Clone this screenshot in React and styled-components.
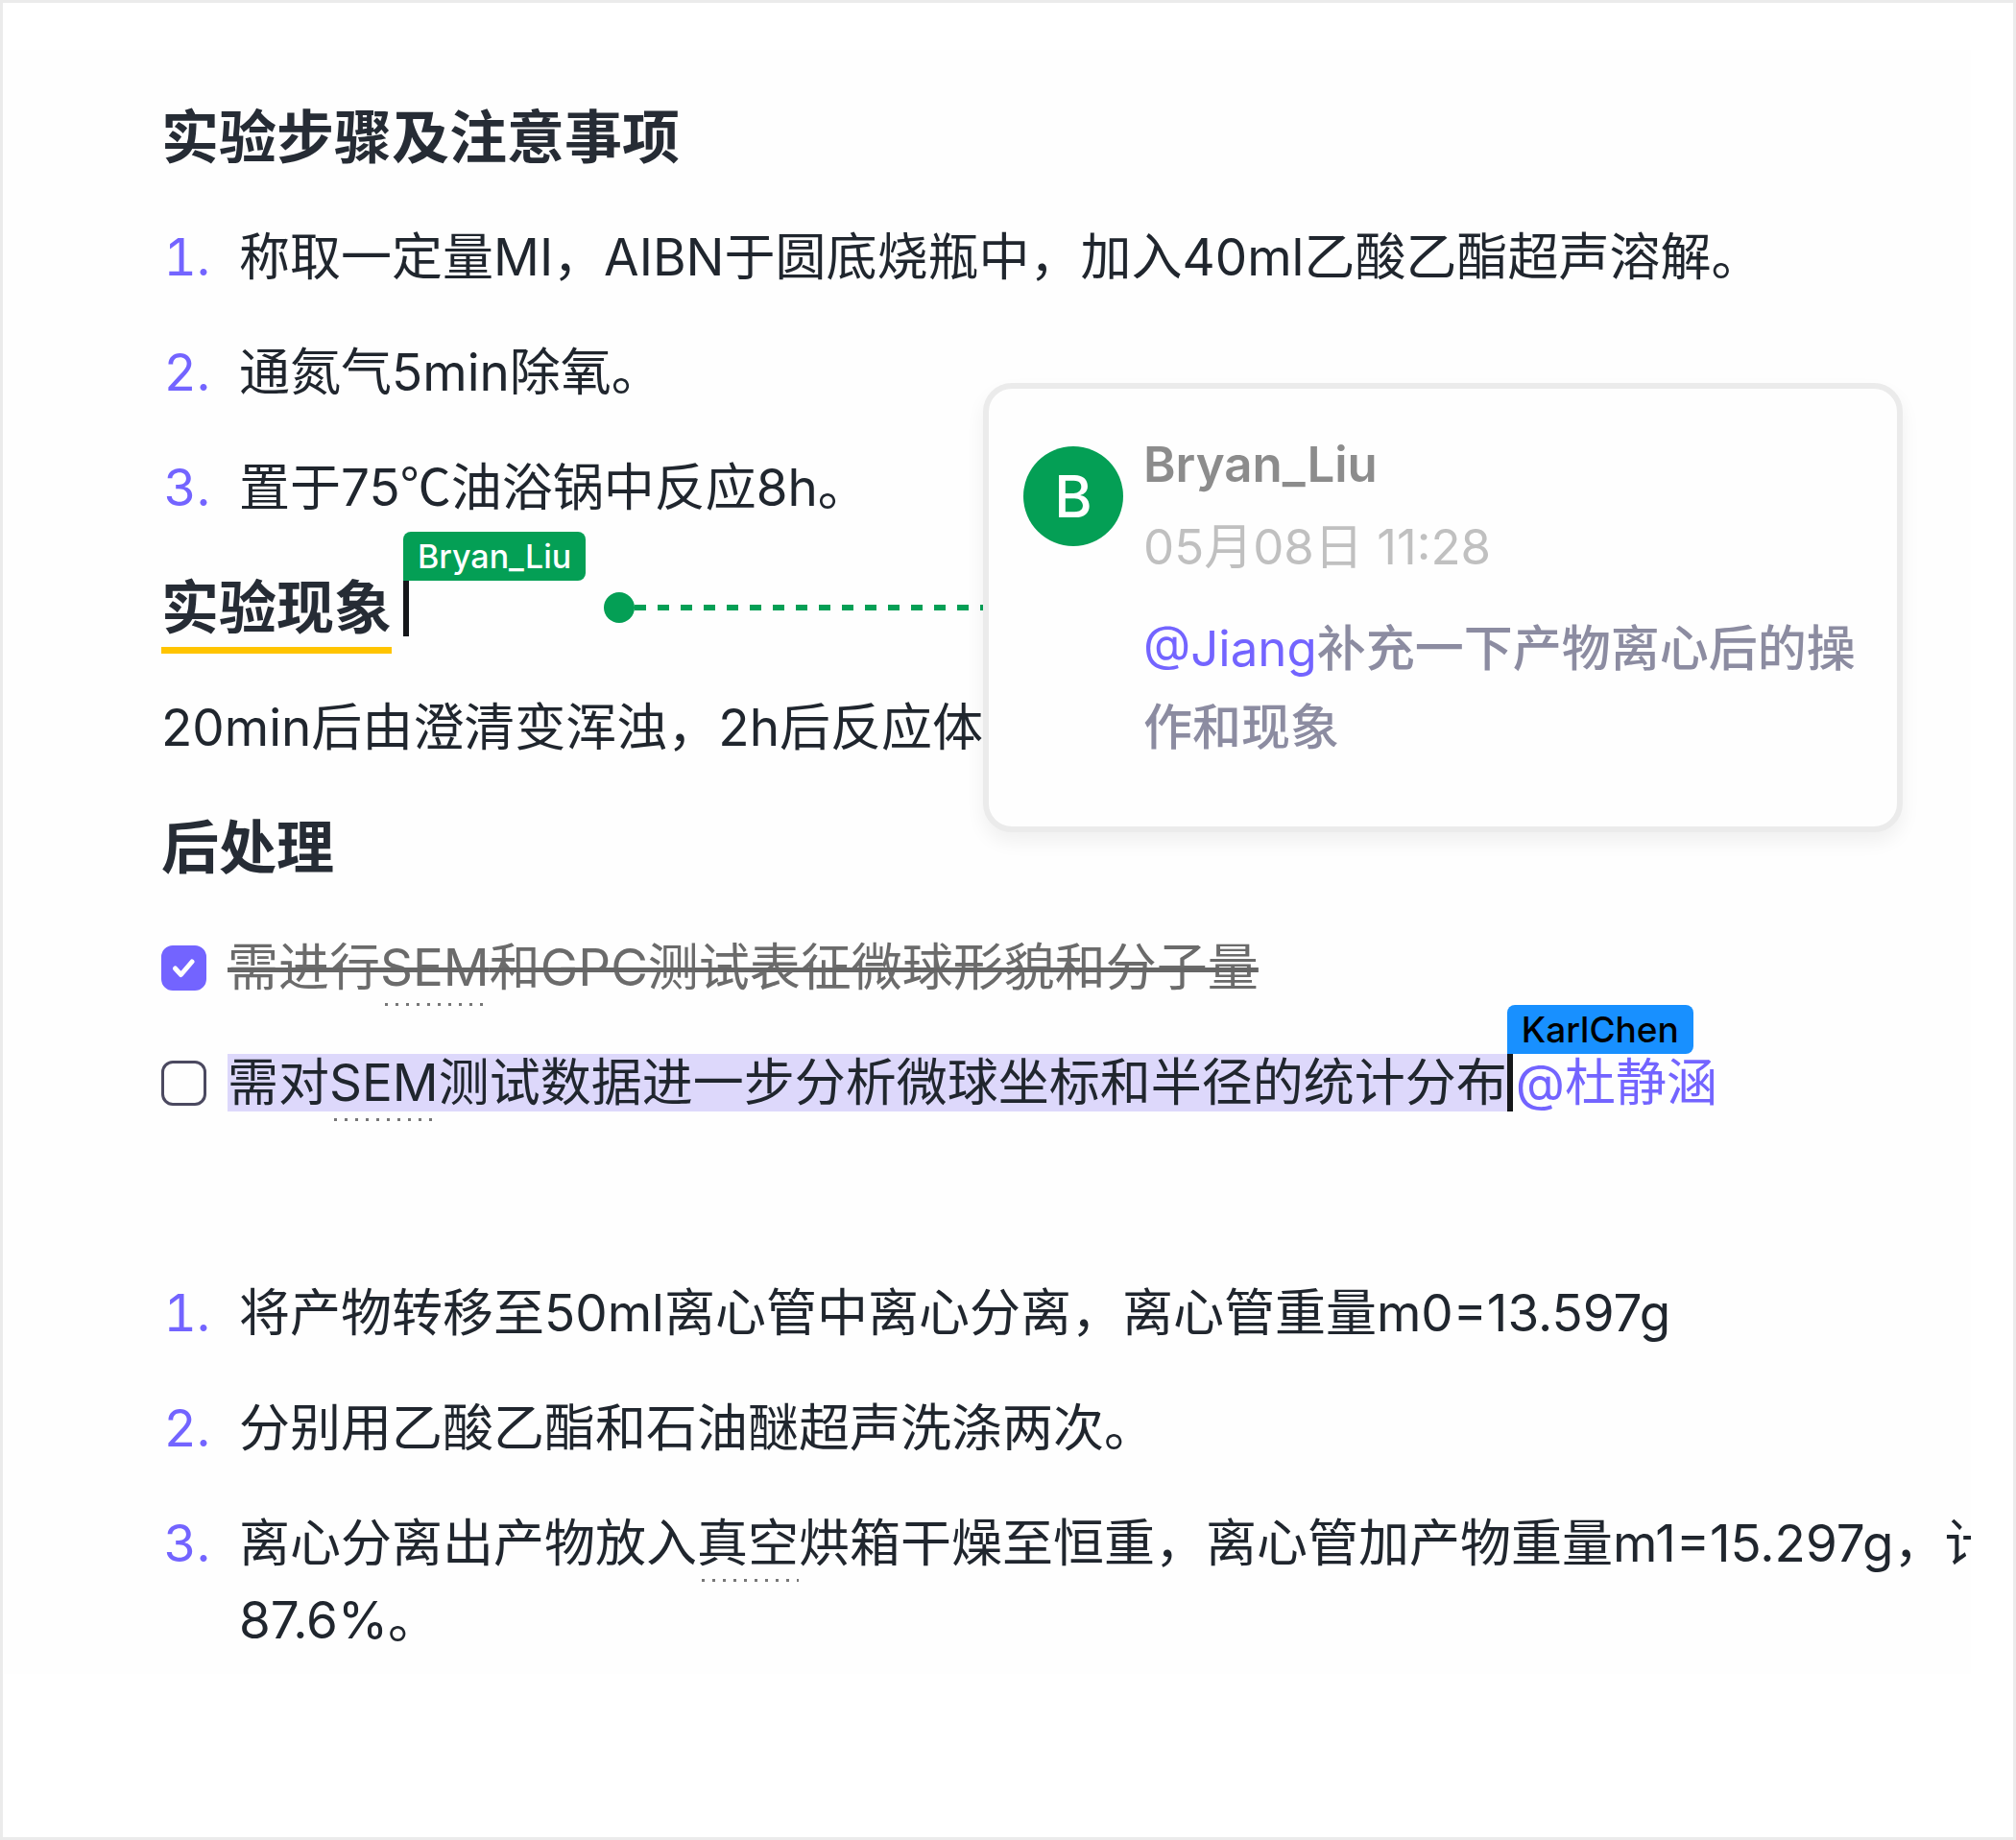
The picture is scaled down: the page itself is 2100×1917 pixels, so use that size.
import React, { useState } from 'react';
import styled, { createGlobalStyle } from 'styled-components';

const GlobalStyle = createGlobalStyle`
  * {
    box-sizing: border-box;
  }
  body {
    margin: 0;
    background-color: #fff;
    color: #20262e;
    font-family: Inter, "Noto Sans CJK SC", sans-serif;
    font-size: 53px;
    line-height: 80px;
  }
`;

const Frame = styled.div`
  min-height: 100vh;
  padding: 49px 44px 49px 0;
  border: 3px solid #ebebeb;
`;

const Paper = styled.main`
  position: relative;
  overflow: hidden;
  padding: 46px 200px 16px 165px;
  background-color: #fefefe;
`;

const Content = styled.div`
  display: flex;
  flex-direction: column;
  gap: 40px;
`;

const HeadingRow = styled.div`
  display: flex;
  align-items: center;
`;

const Heading = styled.h2`
  position: relative;
  margin: 0;
  font-size: 60px;
  font-weight: 600;
  line-height: 90px;
  white-space: nowrap;
  color: #262c35;
`;

const MarkedHeading = styled(Heading)`
  &::after {
    content: "";
    position: absolute;
    left: 0;
    right: 0;
    bottom: -3px;
    height: 7px;
    background-color: #ffc400;
  }
`;

const Caret = styled.span`
  position: relative;
  flex: none;
  width: 6px;
  height: 60px;
  background-color: #15171a;
`;

const HeadingCaret = styled(Caret)`
  height: 58px;
  margin: 2px 0 0 12px;
`;

const SelectionCaret = styled(Caret)`
  position: absolute;
  top: 0;
  left: 100%;
`;

const NameTag = styled.span`
  position: absolute;
  left: 0;
  bottom: 100%;
  padding: 0 15px;
  border-radius: 8px 8px 8px 0;
  background-color: ${(props) => props.$background};
  color: ${(props) => props.$color};
  font-size: ${(props) => props.$size};
  font-weight: 500;
  line-height: 51px;
  white-space: nowrap;
`;

const Connector = styled.div`
  display: flex;
  flex: 1;
  align-items: center;
  margin-left: 203px;
`;

const Dot = styled.span`
  width: 32px;
  height: 32px;
  border-radius: 50%;
  background-color: #049f55;
`;

const Dashes = styled.span`
  flex: 1;
  height: 6px;
  background: repeating-linear-gradient(to right, #049f55 0 12px, transparent 12px 24px);
`;

const Paragraph = styled.p`
  margin: 0;
  white-space: nowrap;
`;

const List = styled.ol`
  display: flex;
  flex-direction: column;
  gap: 40px;
  margin: 0;
  padding: 0;
  list-style: none;
`;

const Item = styled.li`
  display: grid;
  grid-template-columns: 51px 1fr;
  column-gap: 30px;
  white-space: nowrap;
`;

const ItemNumber = styled.span`
  text-align: right;
  font-variant-numeric: tabular-nums;
  color: #7364ff;
`;

// full-width unit signs such as ℃
const Unit = styled.span`
  font-family: "Noto Sans CJK SC", sans-serif;
  line-height: 1;
`;

const BlankLine = styled.div`
  height: 80px;
`;

const Task = styled.div`
  display: flex;
  align-items: center;
  height: 80px;
  white-space: nowrap;
`;

const CheckHolder = styled.span`
  position: relative;
  display: flex;
  margin-right: 22px;
`;

const CheckInput = styled.input`
  appearance: none;
  width: 47px;
  height: 47px;
  margin: 0;
  border: 3px solid #4b4960;
  border-radius: 12px;
  cursor: pointer;

  &:checked {
    border-color: #7364ff;
    background-color: #7364ff;
  }
`;

const CheckMark = styled.svg`
  position: absolute;
  top: 0;
  left: 0;
  width: 47px;
  height: 47px;
  pointer-events: none;
`;

const TaskLabel = styled.label`
  color: ${(props) => (props.$done ? '#6b6b6b' : 'inherit')};
  text-decoration: ${(props) => (props.$done ? 'line-through 5px #666' : 'none')};
`;

const Selection = styled.span`
  position: relative;
  display: block;
  line-height: 60px;
  background-color: #ddd8fb;
`;

const Term = styled.span`
  position: relative;

  &::after {
    content: "";
    position: absolute;
    left: 5px;
    right: 0;
    bottom: -8px;
    height: 3px;
    background: repeating-linear-gradient(to right, #777 0 3px, transparent 3px 11px);
  }
`;

const Mention = styled.a`
  color: #7364ff;
  font-weight: 400;
  text-decoration: none;
`;

const TaskMention = styled(Mention)`
  margin-left: 9px;
`;

const CommentCard = styled.aside`
  position: absolute;
  top: 347px;
  right: 71px;
  display: flex;
  gap: 21px;
  width: 958px;
  padding: 38px 36px 62px;
  border: 6px solid #ebebeb;
  border-radius: 30px;
  background-color: #fefefe;
  box-shadow: 0 10px 20px rgba(0, 0, 0, 0.06);
  font-size: 51px;
  line-height: 82px;
`;

const Avatar = styled.span`
  flex: none;
  width: 104px;
  height: 104px;
  margin-top: 22px;
  border-radius: 50%;
  background-color: #049f55;
  color: #fff;
  font-size: 60px;
  font-weight: 500;
  line-height: 104px;
  text-align: center;
`;

const CommentBody = styled.div`
  flex: 1;
`;

const Author = styled.div`
  color: #8c8c8c;
  font-weight: 600;
`;

const Time = styled.div`
  margin-top: 4px;
  color: #c0c0c0;
`;

const Message = styled.p`
  margin: 24px 0 0;
  color: #8c8ca1;
  font-weight: 500;
`;

const prepSteps = [
  '称取一定量MI，AIBN于圆底烧瓶中，加入40ml乙酸乙酯超声溶解。',
  '通氮气5min除氧。',
  <>置于75<Unit>℃</Unit>油浴锅中反应8h。</>,
];

const workupSteps = [
  '将产物转移至50ml离心管中离心分离，离心管重量m0=13.597g',
  '分别用乙酸乙酯和石油醚超声洗涤两次。',
  <>
    离心分离出产物放入<Term>真空</Term>烘箱干燥至恒重，离心管加产物重量m1=15.297g，计
    <br />
    87.6%。
  </>,
];

function NumberedList({ items }) {
  return (
    <List>
      {items.map((item, index) => (
        <Item key={index}>
          <ItemNumber>{index + 1}.</ItemNumber>
          <div>{item}</div>
        </Item>
      ))}
    </List>
  );
}

function Checkbox({ id, checked, onChange }) {
  return (
    <CheckHolder>
      <CheckInput type="checkbox" id={id} checked={checked} onChange={onChange} />
      {checked && (
        <CheckMark viewBox="0 0 47 47" fill="none" aria-hidden="true">
          <path
            d="M14.5 24l6 6.5L32 17"
            stroke="#fff"
            strokeWidth="5"
            strokeLinecap="round"
            strokeLinejoin="round"
          />
        </CheckMark>
      )}
    </CheckHolder>
  );
}

function App() {
  const [semDone, setSemDone] = useState(true);
  const [dataDone, setDataDone] = useState(false);

  return (
    <>
      <GlobalStyle />
      <Frame>
        <Paper>
          <Content>
            <Heading>实验步骤及注意事项</Heading>
            <NumberedList items={prepSteps} />
            <HeadingRow>
              <MarkedHeading>实验现象</MarkedHeading>
              <HeadingCaret>
                <NameTag $background="#049f55" $color="#fff" $size="34px">Bryan_Liu</NameTag>
              </HeadingCaret>
              <Connector>
                <Dot />
                <Dashes />
              </Connector>
            </HeadingRow>
            <Paragraph>20min后由澄清变浑浊，2h后反应体</Paragraph>
            <Heading>后处理</Heading>
            <Task>
              <Checkbox id="task-sem" checked={semDone} onChange={() => setSemDone(!semDone)} />
              <TaskLabel htmlFor="task-sem" $done={semDone}>
                需进行<Term>SEM</Term>和GPC测试表征微球形貌和分子量
              </TaskLabel>
            </Task>
            <Task>
              <Checkbox id="task-data" checked={dataDone} onChange={() => setDataDone(!dataDone)} />
              <TaskLabel htmlFor="task-data" $done={dataDone}>
                <Selection>
                  需对<Term>SEM</Term>测试数据进一步分析微球坐标和半径的统计分布
                  <SelectionCaret>
                    <NameTag $background="#1890ff" $color="#000" $size="37px">KarlChen</NameTag>
                  </SelectionCaret>
                </Selection>
              </TaskLabel>
              <TaskMention href="#dujinghan">@杜静涵</TaskMention>
            </Task>
            <BlankLine />
            <NumberedList items={workupSteps} />
          </Content>
          <CommentCard>
            <Avatar>B</Avatar>
            <CommentBody>
              <Author>Bryan_Liu</Author>
              <Time>05月08日 11:28</Time>
              <Message>
                <Mention href="#jiang">@Jiang</Mention>补充一下产物离心后的操作和现象
              </Message>
            </CommentBody>
          </CommentCard>
        </Paper>
      </Frame>
    </>
  );
}

export default App;
